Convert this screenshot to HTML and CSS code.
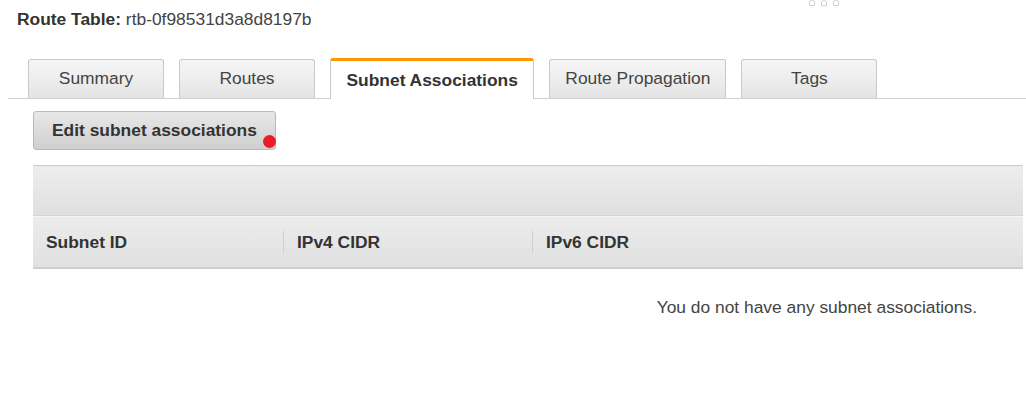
FILE: index.html
```html
<!DOCTYPE html>
<html>
<head>
<meta charset="utf-8">
<link rel="stylesheet" href="styles.css">
</head>
<body>
<div class="page">
  <svg class="grip" width="34" height="7" viewBox="0 0 34 7">
    <g fill="none" stroke="#cfcfcf" stroke-width="1">
      <path d="M1.5 6.5V3.5a2 2 0 0 1 2-2h1a2 2 0 0 1 2 2v3z"/>
      <path d="M13.5 6.5V3.5a2 2 0 0 1 2-2h1a2 2 0 0 1 2 2v3z"/>
      <path d="M25.5 6.5V3.5a2 2 0 0 1 2-2h1a2 2 0 0 1 2 2v3z"/>
    </g>
  </svg>
  <h1 class="title"><span class="title-label">Route Table:</span> rtb-0f98531d3a8d8197b</h1>

  <div class="tabs">
    <div class="tab">Summary</div>
    <div class="tab">Routes</div>
    <div class="tab tab-active">Subnet Associations</div>
    <div class="tab">Route Propagation</div>
    <div class="tab">Tags</div>
  </div>

  <div class="panel">
    <div class="actions">
      <button class="btn">Edit subnet associations<span class="dot"></span></button>
    </div>

    <div class="table">
      <div class="table-toolbar"></div>
      <div class="table-head">
        <div class="th th-first">Subnet ID</div>
        <div class="th">IPv4 CIDR</div>
        <div class="th th-last">IPv6 CIDR</div>
      </div>
    </div>
    <div class="empty">You do not have any subnet associations.</div>
  </div>
</div>
</body>
</html>
```

FILE: styles.css
```css
html, body {
  margin: 0;
  padding: 0;
  background: #fff;
}

body {
  font-family: "Liberation Sans", Arial, sans-serif;
  font-size: 17.4px;
  color: #444;
  width: 1026px;
  height: 405px;
  overflow: hidden;
}

.page {
  position: relative;
}

.grip {
  position: absolute;
  top: -1px;
  left: 808px;
}

.title {
  margin: 0;
  padding: 9px 0 0 17px;
  font-size: 17.4px;
  line-height: 20px;
  font-weight: normal;
  color: #444;
}

.title-label {
  font-weight: bold;
  color: #333;
}

.tabs {
  display: flex;
  align-items: flex-end;
  gap: 15px;
  margin: 29px 0 0 8px;
  padding-left: 20px;
  height: 40px;
  border-bottom: 1px solid #cfcfcf;
}

.tab {
  box-sizing: border-box;
  min-width: 136px;
  height: 39px;
  padding: 0 15px 1px;
  display: flex;
  align-items: center;
  justify-content: center;
  border: 1px solid #c9c9c9;
  border-bottom: none;
  border-radius: 3px 3px 0 0;
  background: linear-gradient(to bottom, #f6f6f6, #e4e4e4);
  color: #444;
  white-space: nowrap;
}

.tab-active {
  height: 41px;
  margin-bottom: -1px;
  padding: 0 15.5px;
  border-top: 3px solid #ff9900;
  border-radius: 3px 3px 0 0;
  background: #fff;
  font-weight: bold;
  color: #333;
}

.panel {
  padding: 12px 3px 0 33px;
}

.actions {
  display: flex;
}

.btn {
  position: relative;
  box-sizing: border-box;
  height: 39px;
  padding: 0 18px;
  font-family: inherit;
  font-size: 17.4px;
  font-weight: bold;
  color: #333;
  border: 1px solid #b9b9b9;
  border-radius: 3px;
  background: linear-gradient(to bottom, #e8e8e8, #cfcfcf);
}

.dot {
  position: absolute;
  right: -1px;
  bottom: 1px;
  width: 13px;
  height: 13px;
  border-radius: 50%;
  background: #ec1c24;
}

.table {
  margin-top: 15px;
  border-top: 1px solid #cbcbcb;
}

.table-toolbar {
  height: 49px;
  background: linear-gradient(to bottom, #ededed, #e0e0e0);
  border-bottom: 1px solid #d4d4d4;
}

.table-head {
  display: flex;
  align-items: center;
  height: 50px;
  border-top: 1px solid #f7f7f7;
  border-bottom: 2px solid #cdcdcd;
  background: linear-gradient(to bottom, #ececec, #e0e0e0);
}

.th {
  box-sizing: border-box;
  width: 249px;
  padding-left: 13px;
  border-left: 1px solid #cfcfcf;
  line-height: 22px;
  font-weight: bold;
  color: #333;
}

.th-first {
  width: 250px;
  border-left: none;
}

.th-last {
  flex: 1;
}

.empty {
  padding: 27px 46px 0 0;
  text-align: right;
  line-height: 22px;
  color: #444;
}
```
